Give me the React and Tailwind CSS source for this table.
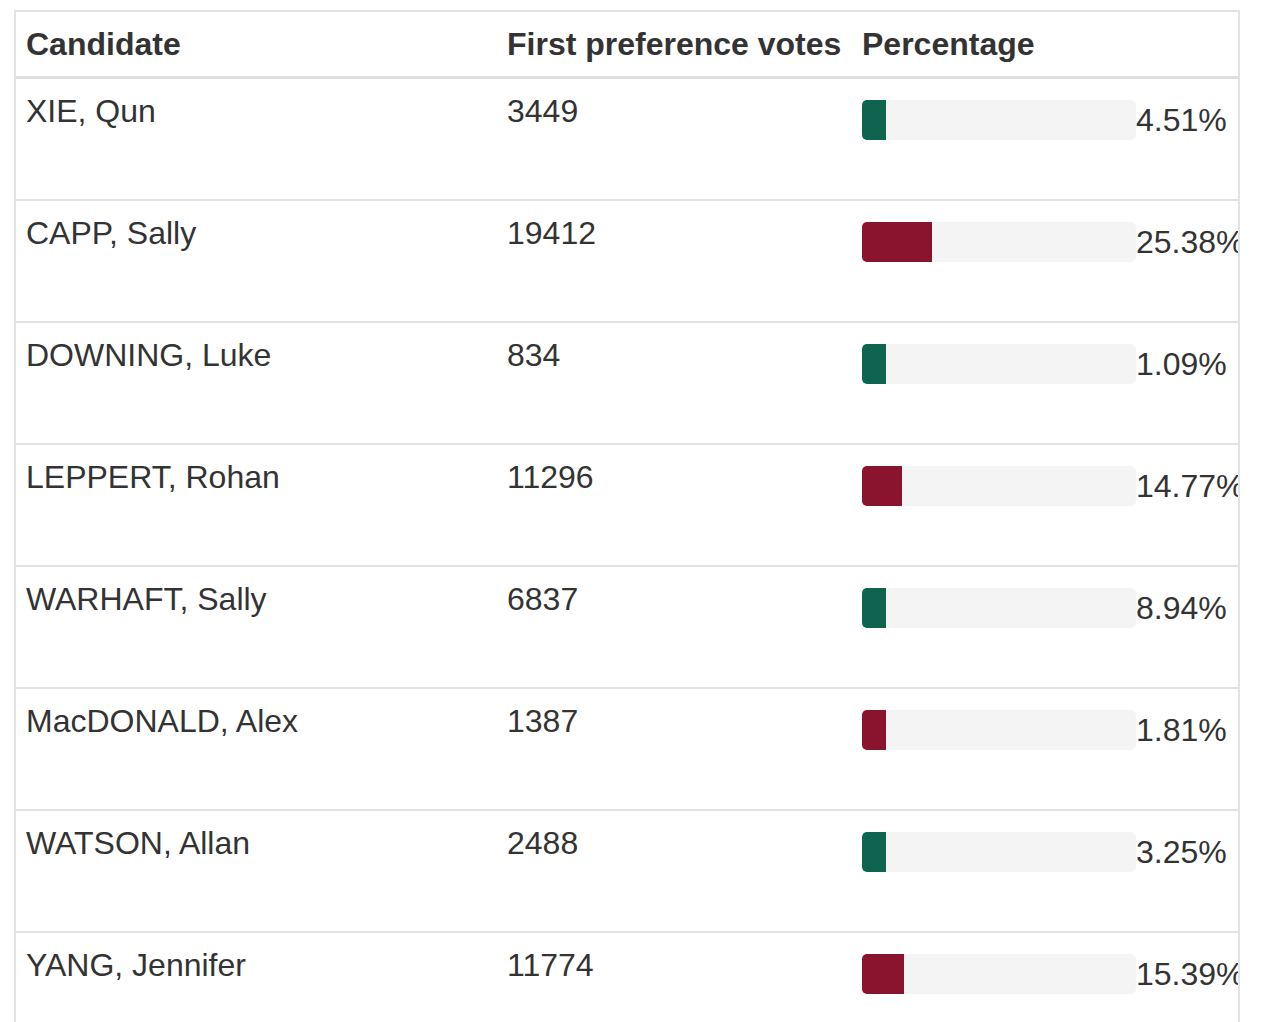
const rows = [
  { name: 'XIE, Qun', votes: 3449, pct: 4.51, color: 'green' },
  { name: 'CAPP, Sally', votes: 19412, pct: 25.38, color: 'red' },
  { name: 'DOWNING, Luke', votes: 834, pct: 1.09, color: 'green' },
  { name: 'LEPPERT, Rohan', votes: 11296, pct: 14.77, color: 'red' },
  { name: 'WARHAFT, Sally', votes: 6837, pct: 8.94, color: 'green' },
  { name: 'MacDONALD, Alex', votes: 1387, pct: 1.81, color: 'red' },
  { name: 'WATSON, Allan', votes: 2488, pct: 3.25, color: 'green' },
  { name: 'YANG, Jennifer', votes: 11774, pct: 15.39, color: 'red' },
];

const BAR_W = 274;

function Bar({ pct, color }) {
  // bars never shrink below a small stub so tiny shares stay visible
  const w = Math.max(24, Math.round((pct / 100) * BAR_W));
  return (
    <div className="h-[40px] w-[274px] shrink-0 rounded-[5px] bg-[#f4f4f4] overflow-hidden">
      <div
        className={color === 'green' ? 'h-full bg-[#0f6450]' : 'h-full bg-[#8a142d]'}
        style={{ width: w }}
      />
    </div>
  );
}

export default function App() {
  return (
    <div className="min-h-[1022px] bg-white pt-[10px] text-[#333] font-['Liberation_Sans',Arial,sans-serif]">
      <div className="ml-[14px] w-[1226px] border-x-2 border-t-2 border-[#e2e2e2] overflow-hidden">
        <div className="grid grid-cols-[479px_355px_1fr] h-[67px] items-center border-b-[3px] border-[#dedede] text-[32px] font-bold">
          <div className="pl-[10px]">Candidate</div>
          <div className="pl-[12px] whitespace-nowrap">First preference votes</div>
          <div className="pl-[12px]">Percentage</div>
        </div>
        {rows.map((r) => (
          <div
            key={r.name}
            className="grid grid-cols-[479px_355px_1fr] h-[122px] border-b-2 border-[#e2e2e2] text-[32px] leading-[36px]"
          >
            <div className="pl-[10px] pt-[14px]">{r.name}</div>
            <div className="pl-[12px] pt-[14px]">{r.votes}</div>
            <div className="pl-[12px] pt-[21px] flex items-start overflow-hidden">
              <Bar pct={r.pct} color={r.color} />
              <span className="text-[32px] leading-[40px] whitespace-nowrap">{r.pct.toFixed(2)}%</span>
            </div>
          </div>
        ))}
      </div>
    </div>
  );
}
